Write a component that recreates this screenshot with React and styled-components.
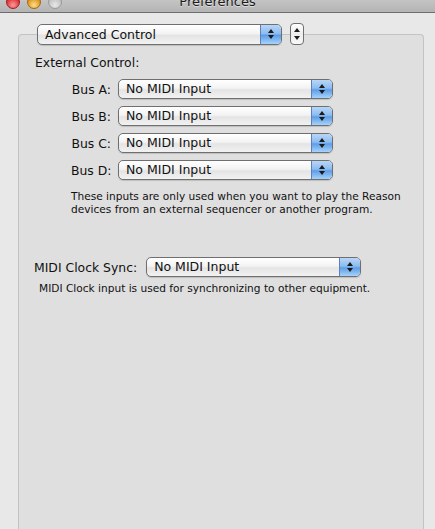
import React from 'react';
import styled, { createGlobalStyle } from 'styled-components';

const GlobalStyle = createGlobalStyle`
  html, body {
    margin: 0;
    padding: 0;
    background: #e8e8e8;
  }
  body {
    font-family: "DejaVu Sans", "Liberation Sans", sans-serif;
    color: #000;
    -webkit-font-smoothing: antialiased;
  }
`;

const Window = styled.div`
  width: 435px;
  height: 529px;
  overflow: hidden;
  display: flex;
  flex-direction: column;
  background: #e8e8e8;
`;

const TitleBar = styled.div`
  position: relative;
  height: 12px;
  flex: none;
  background: linear-gradient(#c4c4c4, #b4b4b4);
  border-bottom: 1px solid #6e6e6e;
  display: flex;
  align-items: flex-end;
  justify-content: center;
  overflow: hidden;
`;

const Title = styled.div`
  font-size: 13px;
  line-height: 13px;
  color: #1c1c1c;
  margin-bottom: 4px;
  text-shadow: 0 1px 0 rgba(255, 255, 255, 0.5);
`;

const Lights = styled.div`
  position: absolute;
  left: 6px;
  top: -5px;
  display: flex;
  gap: 7px;
`;

const Light = styled.span`
  width: 14px;
  height: 14px;
  border-radius: 50%;
  border: 1px solid ${(p) => p.$edge};
  box-sizing: border-box;
  background: radial-gradient(circle at 50% 75%, ${(p) => p.$glow} 0%, ${(p) => p.$color} 70%);
`;

const Content = styled.div`
  flex: 1;
  position: relative;
  padding: 21px 11px 0 18px;
`;

const GroupBox = styled.div`
  height: 100%;
  box-sizing: border-box;
  background: #dfdfdf;
  border: 1px solid #c3c3c3;
  border-bottom: none;
  border-radius: 4px 4px 0 0;
  padding: 20px 0 0 0;
`;

const TabSelector = styled.div`
  position: absolute;
  top: 10px;
  left: 37px;
  display: flex;
  align-items: center;
  gap: 8px;
`;

const Popup = styled.div`
  width: ${(p) => p.$width}px;
  height: ${(p) => p.$height || 20}px;
  box-sizing: border-box;
  display: flex;
  border: 1px solid #6f6f6f;
  border-radius: 5px;
  overflow: hidden;
  background: linear-gradient(#ffffff 0%, #f3f3f3 45%, #e4e4e4 55%, #f2f2f2 100%);
  box-shadow: 0 1px 1px rgba(0, 0, 0, 0.15);
`;

const PopupLabel = styled.div`
  flex: 1;
  font-size: 12.5px;
  line-height: ${(p) => (p.$height || 20) - 2}px;
  padding-left: 7px;
  white-space: nowrap;
  color: #111;
`;

const PopupArrow = styled.div`
  width: 20px;
  flex: none;
  border-left: 1px solid #5d7fc0;
  background: linear-gradient(#b9d6f6 0%, #8cbcf0 45%, #5d9de6 55%, #a7d3fb 100%);
  display: flex;
  flex-direction: column;
  align-items: center;
  justify-content: center;
  gap: 2px;
`;

const Tri = styled.span`
  width: 0;
  height: 0;
  border-left: 3px solid transparent;
  border-right: 3px solid transparent;
  ${(p) => (p.$down ? 'border-top: 4px solid #1a1a1a;' : 'border-bottom: 4px solid #1a1a1a;')}
`;

const Stepper = styled.div`
  width: 14px;
  height: 22px;
  box-sizing: border-box;
  border: 1px solid #6f6f6f;
  border-radius: 4px;
  background: linear-gradient(#ffffff, #ececec 50%, #f8f8f8);
  display: flex;
  flex-direction: column;
  align-items: center;
  justify-content: center;
  gap: 4px;
`;

const SectionTitle = styled.div`
  font-size: 12.4px;
  line-height: 16px;
  margin-left: 16px;
  color: #111;
`;

const BusList = styled.div`
  display: flex;
  flex-direction: column;
  gap: 7px;
  margin-top: 8px;
  margin-left: 52px;
`;

const FieldRow = styled.div`
  display: flex;
  align-items: center;
  gap: 7px;
`;

const FieldLabel = styled.div`
  font-size: 12.4px;
  color: #111;
  white-space: nowrap;
  ${(p) => p.$width && `width: ${p.$width}px; text-align: right;`}
`;

const HelpText = styled.div`
  font-size: 10.6px;
  line-height: 13px;
  color: #111;
  margin-top: ${(p) => p.$top}px;
  margin-left: ${(p) => p.$left}px;
`;

const ClockRow = styled(FieldRow)`
  margin-top: 41px;
  margin-left: 15px;
  gap: 9px;
`;

const PopupButton = ({ label, width, height }) => (
  <Popup $width={width} $height={height}>
    <PopupLabel $height={height}>{label}</PopupLabel>
    <PopupArrow>
      <Tri />
      <Tri $down />
    </PopupArrow>
  </Popup>
);

const buses = ['Bus A:', 'Bus B:', 'Bus C:', 'Bus D:'];

const App = () => (
  <Window>
    <GlobalStyle />
    <TitleBar>
      <Lights>
        <Light $color="#d8262a" $glow="#ff9a9a" $edge="#9a2020" />
        <Light $color="#d88a10" $glow="#ffe08a" $edge="#a06a10" />
        <Light $color="#bdbdbd" $glow="#e8e8e8" $edge="#9a9a9a" />
      </Lights>
      <Title>Preferences</Title>
    </TitleBar>
    <Content>
      <TabSelector>
        <PopupButton label="Advanced Control" width={245} height={21} />
        <Stepper>
          <Tri />
          <Tri $down />
        </Stepper>
      </TabSelector>
      <GroupBox>
        <SectionTitle>External Control:</SectionTitle>
        <BusList>
          {buses.map((bus) => (
            <FieldRow key={bus}>
              <FieldLabel $width={40}>{bus}</FieldLabel>
              <PopupButton label="No MIDI Input" width={215} />
            </FieldRow>
          ))}
        </BusList>
        <HelpText $top={10} $left={52}>
          These inputs are only used when you want to play the Reason
          <br />
          devices from an external sequencer or another program.
        </HelpText>
        <ClockRow>
          <FieldLabel>MIDI Clock Sync:</FieldLabel>
          <PopupButton label="No MIDI Input" width={215} />
        </ClockRow>
        <HelpText $top={5} $left={20}>
          MIDI Clock input is used for synchronizing to other equipment.
        </HelpText>
      </GroupBox>
    </Content>
  </Window>
);

export default App;
